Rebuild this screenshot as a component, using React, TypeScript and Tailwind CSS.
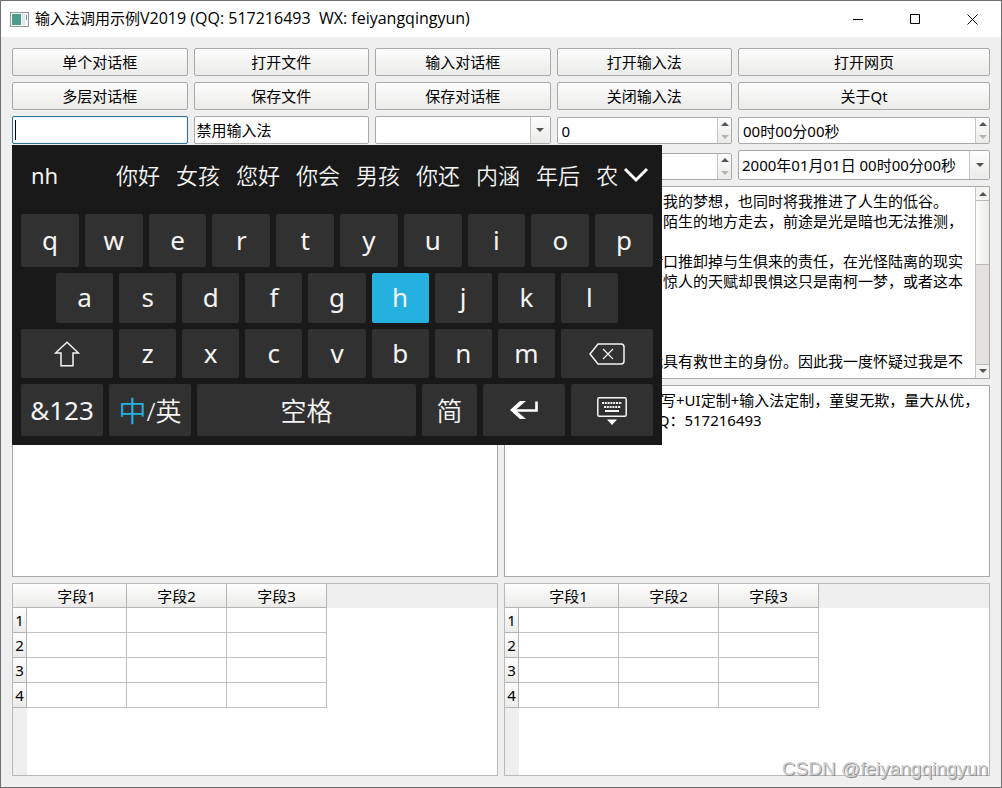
import type { ReactNode } from 'react';

const frame = 'border border-[#a9a9a7] bg-white';
const face = 'bg-linear-to-b from-[#fdfdfd] to-[#ebebe9]';

const actions = [
  '单个对话框', '打开文件', '输入对话框', '打开输入法', '打开网页',
  '多层对话框', '保存文件', '保存对话框', '关闭输入法', '关于Qt',
];

const candidates = ['你好', '女孩', '您好', '你会', '男孩', '你还', '内涵', '年后', '农'];

const story = [
  '了我的梦想，也同时将我推进了人生的低谷。',
  '着陌生的地方走去，前途是光是暗也无法推测，',
  '',
  '借口推卸掉与生俱来的责任，在光怪陆离的现实',
  '有惊人的天赋却畏惧这只是南柯一梦，或者这本',
  '',
  '',
  '',
  '我具有救世主的身份。因此我一度怀疑过我是不',
].join('\n');

const notice = ['编写+UI定制+输入法定制，童叟无欺，量大从优，', 'QQ：517216493'].join('\n');

function Arrow({ up = false, faded = false }: { up?: boolean; faded?: boolean }) {
  return (
    <svg viewBox="0 0 8 4" className={faded ? 'h-1 w-2 text-[#b4b4b2]' : 'h-1 w-2 text-[#555]'} aria-hidden="true">
      <path d={up ? 'M0 4 4 0l4 4z' : 'M0 0h8L4 4z'} fill="currentColor" />
    </svg>
  );
}

function SpinBox({ label, value }: { label: string; value: string }) {
  return (
    <div className={`flex h-[27px] self-end overflow-hidden rounded-xs ${frame}`}>
      <input aria-label={label} defaultValue={value} className="min-w-0 flex-1 px-1 outline-none" />
      <div className={`flex w-3.5 flex-col border-l border-[#c4c4c2] ${face}`}>
        <button aria-label={`${label} 增加`} className="flex flex-1 items-center justify-center"><Arrow up /></button>
        <button aria-label={`${label} 减少`} className="flex flex-1 items-center justify-center"><Arrow faded /></button>
      </div>
    </div>
  );
}

function Key({ children, className = 'flex-1 pb-0.5', label, active = false }: { children: ReactNode; className?: string; label?: string; active?: boolean }) {
  return (
    <button
      aria-label={label}
      className={`flex min-w-0 items-center justify-center rounded-xs leading-none ${active ? 'bg-[#25b1e0]' : 'bg-[#313131]'} ${className}`}
    >
      {children}
    </button>
  );
}

function Keyboard() {
  return (
    <div className="absolute top-[108px] left-[11px] flex h-[300px] w-[650px] flex-col gap-1.5 bg-[#191919] px-[9px] pb-[9px] text-[26px] text-[#f4f4f4]">
      <div className="flex h-[63px] items-center pb-1 text-[22px] leading-8">
        <span className="w-[95px] shrink-0 pl-2.5">nh</span>
        <div className="flex flex-1 gap-4 overflow-hidden font-[350]">
          {candidates.map((word) => (
            <button key={word} className="shrink-0">{word}</button>
          ))}
        </div>
        <button aria-label="更多候选" className="flex w-[34px] shrink-0 justify-center">
          <svg viewBox="0 0 26 16" className="h-4 w-[26px]" fill="none" stroke="#fff" strokeWidth="3">
            <path d="m2 2 11 11L24 2" />
          </svg>
        </button>
      </div>
      <div className="flex h-[53px] gap-1.5">
        {[...'qwertyuiop'].map((c) => <Key key={c}>{c}</Key>)}
      </div>
      <div className="flex h-[50px] gap-1.5 px-[35px]">
        {[...'asdfghjkl'].map((c) => <Key key={c} active={c === 'h'}>{c}</Key>)}
      </div>
      <div className="flex h-[49px] gap-1.5">
        <Key label="切换大小写" className="w-[92px]">
          <svg viewBox="0 0 26 26" className="size-[26px]" fill="none" stroke="#f4f4f4" strokeWidth="1.5">
            <path d="M13 1.2 24.5 12H19v12.8H7V12H1.5z" />
          </svg>
        </Key>
        {[...'zxcvbnm'].map((c) => <Key key={c}>{c}</Key>)}
        <Key label="退格" className="w-[92px]">
          <svg viewBox="0 0 36 22" className="h-[22px] w-9" fill="none" stroke="#f4f4f4" strokeWidth="1.5">
            <path d="M9 1h23a3 3 0 0 1 3 3v14a3 3 0 0 1-3 3H9L1 11z" />
            <path d="m14 6 10 10M24 6 14 16" strokeWidth="1.2" />
          </svg>
        </Key>
      </div>
      <div className="flex h-[52px] gap-1.5">
        <Key className="w-[82px]">&amp;123</Key>
        <Key className="w-[82px] pt-0.5 font-[350]"><span className="text-[28px] text-[#25b1e0]">中</span>/英</Key>
        <Key className="flex-1 pt-0.5 font-[350]">空格</Key>
        <Key className="w-[55px] pt-0.5 font-[350]">简</Key>
        <Key label="回车" className="w-[82px]">
          <svg viewBox="0 0 28 20" className="h-5 w-7" fill="none" stroke="#fff">
            <path d="M26.500 1.500V10.500H3" strokeWidth="2.600" />
            <path d="M10 1h6L5.500 10 16 19h-6L0 10z" fill="#fff" stroke="none" />
          </svg>
        </Key>
        <Key label="隐藏键盘" className="w-[82px] pt-0.5">
          <svg viewBox="0 0 30 28" className="h-7 w-[30px]" fill="none" stroke="#f4f4f4">
            <rect x="0.8" y="0.8" width="28.400" height="18.400" rx="1.5" strokeWidth="1.5" />
            <path d="M5 6h20M7 10h17" strokeWidth="2" strokeDasharray="2 0.8" />
            <path d="M8 14h14" strokeWidth="2" />
            <path d="M10 22.500h10L15 28z" fill="#fff" stroke="none" />
          </svg>
        </Key>
      </div>
    </div>
  );
}

function FieldTable() {
  return (
    <table className="h-full w-full table-fixed border-separate border-spacing-0 border border-[#b9b9b9] bg-white">
      <colgroup>
        <col className="w-3.5" />
        <col className="w-[100px]" />
        <col className="w-[100px]" />
        <col className="w-[100px]" />
        <col />
      </colgroup>
      <thead>
        <tr className="h-6">
          <td className={`border-b border-[#b4b4b4] p-0 ${face}`} />
          {['字段1', '字段2', '字段3'].map((name) => (
            <th key={name} scope="col" className={`border-r border-b border-[#b4b4b4] p-0 leading-5 font-normal ${face}`}>{name}</th>
          ))}
          <td className="bg-[#efefef] p-0" />
        </tr>
      </thead>
      <tbody>
        {[1, 2, 3, 4].map((row) => (
          <tr key={row} className="h-[25px]">
            <th scope="row" className="border-r border-b border-[#b4b4b4] bg-linear-to-b from-[#fdfdfd] to-[#ebebe9] p-0 leading-5 font-normal">{row}</th>
            {[1, 2, 3].map((col) => (
              <td key={col} className="border-r border-b border-[#c0c0c0] p-0" />
            ))}
            <td className="p-0" />
          </tr>
        ))}
        <tr>
          <td className="bg-[#efefef] p-0" />
          <td colSpan={4} className="p-0" />
        </tr>
      </tbody>
    </table>
  );
}

export default function App() {
  return (
    <div className="relative flex min-h-screen flex-col border border-[#707070] bg-[#efefef] font-['Noto_Sans','Noto_Sans_CJK_SC',sans-serif] text-[15px] leading-5 text-black">
      <header className="flex h-9 items-center bg-white pl-[9px]">
        <svg viewBox="0 0 19 15" className="h-[15px] w-[19px]" aria-hidden="true">
          <rect x="0.5" y="0.5" width="18" height="14" fill="#f8f8f8" stroke="#8f9a9a" />
          <rect x="2" y="2" width="9" height="11" fill="#4c9c8c" />
          <rect x="12" y="2" width="3" height="11" fill="#e2e6e8" />
          <path d="M16.500 3v5" stroke="#6a9bb0" />
        </svg>
        <h1 className="ml-1.5 flex-1 pb-0.5 whitespace-pre">输入法调用示例<span className="font-['Open_Sans',sans-serif] text-base leading-5">V2019 (QQ: 517216493  WX: feiyangqingyun)</span></h1>
        <div className="flex self-stretch">
          <button aria-label="最小化" className="flex w-[57px] items-center justify-center">
            <svg viewBox="0 0 11 11" className="size-[11px]" stroke="#000"><path d="M0 5.500h10" /></svg>
          </button>
          <button aria-label="最大化" className="flex w-[57px] items-center justify-center">
            <svg viewBox="0 0 11 11" className="size-[11px]" stroke="#000" fill="none"><path d="M.5.5h9v9h-9z" /></svg>
          </button>
          <button aria-label="关闭" className="flex w-[57px] items-center justify-center">
            <svg viewBox="0 0 11 11" className="size-[11px]" stroke="#000"><path d="m.5.5 10 10m0-10-10 10" /></svg>
          </button>
        </div>
      </header>

      <main className="relative flex flex-1 flex-col gap-1.5 p-[11px]">
        <div className="grid grid-cols-[repeat(4,minmax(0,1fr))_252px] gap-1.5">
          {actions.map((name) => (
            <button key={name} className={`h-7 rounded-xs border border-[#a9a9a7] ${face}`}>{name}</button>
          ))}

          <div className="relative flex h-7">
            <input aria-label="输入内容" className="w-full min-w-0 rounded-xs border border-[#2f7096] bg-white px-0.5 shadow-[inset_0_0_1px_#57a8d4] outline-none" />
            <span className="absolute top-1 left-[3px] h-5 w-px bg-black" />
          </div>
          <input aria-label="禁用输入法" defaultValue="禁用输入法" className={`h-7 w-full min-w-0 rounded-xs px-0.5 pb-0.5 outline-none ${frame}`} />
          <div className="relative flex h-7">
            <select aria-label="下拉选择" className={`w-full min-w-0 appearance-none rounded-xs pl-1 outline-none ${frame}`}>
              <option value="" />
            </select>
            <span className={`pointer-events-none absolute inset-y-px right-px flex w-5 items-center justify-center border-l border-[#c4c4c2] ${face}`}><Arrow /></span>
          </div>
          <SpinBox label="数值" value="0" />
          <SpinBox label="时间" value="00时00分00秒" />

          <div className="col-start-4 flex flex-col justify-end *:self-stretch"><SpinBox label="小数" value="" /></div>
          <div className={`flex h-[30px] overflow-hidden rounded-xs ${frame}`}>
            <input aria-label="日期时间" defaultValue="2000年01月01日 00时00分00秒" className="min-w-0 flex-1 pl-[3px] outline-none" />
            <button aria-label="打开日历" className={`flex w-5 items-center justify-center border-l border-[#c4c4c2] ${face}`}><Arrow /></button>
          </div>
        </div>

        <div className="grid flex-1 grid-cols-2 grid-rows-3 gap-1.5">
          <textarea aria-label="文本一" className={`size-full resize-none outline-none ${frame}`} />
          <div className={`flex min-w-0 ${frame}`}>
            <textarea
              aria-label="文本二"
              wrap="off"
              defaultValue={story}
              className="min-w-0 flex-1 resize-none overflow-hidden pt-1 pl-[143px] outline-none"
            />
            <div className="flex w-3.5 flex-col border-l border-[#c4c4c2] bg-[#e3e2e0]">
              <button aria-label="向上滚动" className="flex h-3.5 items-center justify-center border-b border-[#b9b9b7] bg-[#f4f4f3]"><Arrow up /></button>
              <div className="h-16 border-b border-[#b9b9b7] bg-linear-to-r from-[#fdfdfd] to-[#ebebe9]" />
              <div className="flex-1" />
              <button aria-label="向下滚动" className="flex h-3.5 items-center justify-center border-t border-[#b9b9b7] bg-[#f4f4f3]"><Arrow /></button>
            </div>
          </div>
          <textarea aria-label="文本三" className={`size-full resize-none outline-none ${frame}`} />
          <textarea
            aria-label="文本四"
            wrap="off"
            defaultValue={notice}
            className={`size-full resize-none overflow-hidden pt-1 pl-[141px] outline-none ${frame}`}
          />
          <FieldTable />
          <FieldTable />
        </div>

        <Keyboard />
      </main>

      <span className="absolute right-[13px] bottom-2 font-['Liberation_Sans',sans-serif] text-[19px] leading-5 text-[#d0d0d0] [text-shadow:1px_1px_0_#8f8f8f]">CSDN @feiyangqingyun</span>
    </div>
  );
}
